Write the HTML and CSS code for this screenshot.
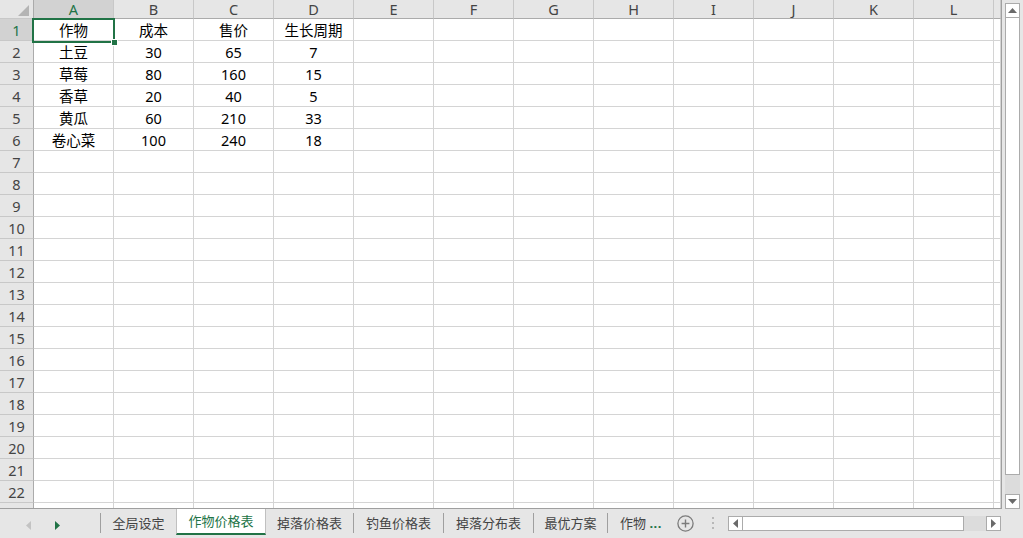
FILE: index.html
```html
<!DOCTYPE html>
<html lang="zh-CN">
<head>
    <meta charset="UTF-8">
    <title>作物价格表 - Excel</title>
    <link rel="stylesheet" href="styles.css">
</head>
<body>
    <div class="window">
        <div class="main">
            <div class="grid">
                <table class="sheet">
                    <colgroup>
                        <col class="col-rh">
                        <col class="col"><col class="col"><col class="col"><col class="col">
                        <col class="col"><col class="col"><col class="col"><col class="col">
                        <col class="col"><col class="col"><col class="col"><col class="col">
                        <col class="col-rest">
                    </colgroup>
                    <tr class="hdr">
                        <th class="corner"><svg width="11" height="11" viewBox="0 0 11 11"><polygon points="11,0 11,11 0,11" fill="#b4b4b4"/></svg></th>
                        <th class="sel">A</th><th>B</th><th>C</th><th>D</th><th>E</th><th>F</th>
                        <th>G</th><th>H</th><th>I</th><th>J</th><th>K</th><th>L</th><th></th>
                    </tr>
                    <tr><th class="sel">1</th><td>作物</td><td>成本</td><td>售价</td><td>生长周期</td><td></td><td></td><td></td><td></td><td></td><td></td><td></td><td></td><td></td></tr>
                    <tr><th>2</th><td>土豆</td><td>30</td><td>65</td><td>7</td><td></td><td></td><td></td><td></td><td></td><td></td><td></td><td></td><td></td></tr>
                    <tr><th>3</th><td>草莓</td><td>80</td><td>160</td><td>15</td><td></td><td></td><td></td><td></td><td></td><td></td><td></td><td></td><td></td></tr>
                    <tr><th>4</th><td>香草</td><td>20</td><td>40</td><td>5</td><td></td><td></td><td></td><td></td><td></td><td></td><td></td><td></td><td></td></tr>
                    <tr><th>5</th><td>黄瓜</td><td>60</td><td>210</td><td>33</td><td></td><td></td><td></td><td></td><td></td><td></td><td></td><td></td><td></td></tr>
                    <tr><th>6</th><td>卷心菜</td><td>100</td><td>240</td><td>18</td><td></td><td></td><td></td><td></td><td></td><td></td><td></td><td></td><td></td></tr>
                    <tr><th>7</th><td></td><td></td><td></td><td></td><td></td><td></td><td></td><td></td><td></td><td></td><td></td><td></td><td></td></tr>
                    <tr><th>8</th><td></td><td></td><td></td><td></td><td></td><td></td><td></td><td></td><td></td><td></td><td></td><td></td><td></td></tr>
                    <tr><th>9</th><td></td><td></td><td></td><td></td><td></td><td></td><td></td><td></td><td></td><td></td><td></td><td></td><td></td></tr>
                    <tr><th>10</th><td></td><td></td><td></td><td></td><td></td><td></td><td></td><td></td><td></td><td></td><td></td><td></td><td></td></tr>
                    <tr><th>11</th><td></td><td></td><td></td><td></td><td></td><td></td><td></td><td></td><td></td><td></td><td></td><td></td><td></td></tr>
                    <tr><th>12</th><td></td><td></td><td></td><td></td><td></td><td></td><td></td><td></td><td></td><td></td><td></td><td></td><td></td></tr>
                    <tr><th>13</th><td></td><td></td><td></td><td></td><td></td><td></td><td></td><td></td><td></td><td></td><td></td><td></td><td></td></tr>
                    <tr><th>14</th><td></td><td></td><td></td><td></td><td></td><td></td><td></td><td></td><td></td><td></td><td></td><td></td><td></td></tr>
                    <tr><th>15</th><td></td><td></td><td></td><td></td><td></td><td></td><td></td><td></td><td></td><td></td><td></td><td></td><td></td></tr>
                    <tr><th>16</th><td></td><td></td><td></td><td></td><td></td><td></td><td></td><td></td><td></td><td></td><td></td><td></td><td></td></tr>
                    <tr><th>17</th><td></td><td></td><td></td><td></td><td></td><td></td><td></td><td></td><td></td><td></td><td></td><td></td><td></td></tr>
                    <tr><th>18</th><td></td><td></td><td></td><td></td><td></td><td></td><td></td><td></td><td></td><td></td><td></td><td></td><td></td></tr>
                    <tr><th>19</th><td></td><td></td><td></td><td></td><td></td><td></td><td></td><td></td><td></td><td></td><td></td><td></td><td></td></tr>
                    <tr><th>20</th><td></td><td></td><td></td><td></td><td></td><td></td><td></td><td></td><td></td><td></td><td></td><td></td><td></td></tr>
                    <tr><th>21</th><td></td><td></td><td></td><td></td><td></td><td></td><td></td><td></td><td></td><td></td><td></td><td></td><td></td></tr>
                    <tr><th>22</th><td></td><td></td><td></td><td></td><td></td><td></td><td></td><td></td><td></td><td></td><td></td><td></td><td></td></tr>
                    <tr><th>23</th><td></td><td></td><td></td><td></td><td></td><td></td><td></td><td></td><td></td><td></td><td></td><td></td><td></td></tr>
                </table>
                <div class="selection"><span class="handle"></span></div>
            </div>
            <div class="vscroll">
                <div class="sbtn"><svg width="9" height="5" viewBox="0 0 9 5"><polygon points="0,5 9,5 4.5,0" fill="#6a6a6a"/></svg></div>
                <div class="vthumb"></div>
                <div class="vtrack"></div>
                <div class="sbtn"><svg width="9" height="5" viewBox="0 0 9 5"><polygon points="0,0 9,0 4.5,5" fill="#6a6a6a"/></svg></div>
            </div>
        </div>

        <div class="tabbar">
            <div class="nav">
                <svg width="5" height="9" viewBox="0 0 5 9"><polygon points="5,0 5,9 0,4.5" fill="#c3c3c3"/></svg>
                <svg width="5" height="9" viewBox="0 0 5 9"><polygon points="0,0 0,9 5,4.5" fill="#217346"/></svg>
            </div>
            <div class="tabs">
                <div class="tab w76">全局设定</div>
                <div class="tab active">作物价格表</div>
                <div class="tab w87 after-active">掉落价格表</div>
                <div class="tab w90">钓鱼价格表</div>
                <div class="tab w90">掉落分布表</div>
                <div class="tab w74">最优方案</div>
                <div class="tab last">作物 <span class="more">...</span></div>
            </div>
            <div class="add">
                <svg width="17" height="17" viewBox="0 0 17 17"><circle cx="8.5" cy="8.5" r="7.6" fill="none" stroke="#7b7b7b" stroke-width="1.3"/><path d="M8.5 4.6v7.8M4.6 8.5h7.8" stroke="#7b7b7b" stroke-width="1.4"/></svg>
            </div>
            <div class="grip"><span></span><span></span><span></span></div>
            <div class="hscroll">
                <div class="sbtn"><svg width="5" height="9" viewBox="0 0 5 9"><polygon points="5,0 5,9 0,4.5" fill="#6a6a6a"/></svg></div>
                <div class="hthumb"></div>
                <div class="htrack"></div>
                <div class="sbtn"><svg width="5" height="9" viewBox="0 0 5 9"><polygon points="0,0 0,9 5,4.5" fill="#6a6a6a"/></svg></div>
            </div>
        </div>
    </div>
</body>
</html>
```

FILE: styles.css
```css
* {
    margin: 0;
    padding: 0;
    box-sizing: border-box;
}

body {
    font-family: "Noto Sans", "Noto Sans CJK SC", sans-serif;
    background-color: #ffffff;
    width: 1023px;
    height: 538px;
    overflow: hidden;
    color: #000000;
}

.window {
    display: flex;
    flex-direction: column;
    height: 538px;
}

.main {
    display: flex;
    height: 509px;
}

/* sheet grid */
.grid {
    position: relative;
    width: 1002px;
    height: 509px;
    overflow: hidden;
    border-right: 1px solid #9f9f9f;
    border-bottom: 1px solid #9f9f9f;
}

.sheet {
    border-collapse: separate;
    border-spacing: 0;
    table-layout: fixed;
    width: 1001px;
}

.col-rh { width: 34px; }
.col { width: 80px; }
.col-rest { width: 7px; }

.sheet td,
.sheet th {
    height: 22px;
    padding: 0;
    border-right: 1px solid #d4d4d4;
    border-bottom: 1px solid #d4d4d4;
    text-align: center;
    vertical-align: middle;
    font-size: 14.5px;
    font-weight: normal;
    line-height: 20px;
    white-space: nowrap;
    overflow: hidden;
}

.sheet th {
    background-color: #e6e6e6;
    color: #444444;
    font-size: 14.5px;
}

.sheet tr th:first-child {
    border-right: 1px solid #ababab;
    border-bottom: 1px solid #c8c8c8;
}

.sheet .hdr th {
    height: 19px;
    line-height: 18px;
    border-right: 1px solid #c8c8c8;
    border-bottom: 1px solid #ababab;
}

.sheet .hdr th.corner {
    border-right: 1px solid #ababab;
    text-align: right;
    vertical-align: bottom;
    padding: 0 4px 2px 0;
    line-height: 0;
}

.sheet th.sel {
    background-color: #d2d2d2;
    color: #217346;
}

.selection {
    position: absolute;
    left: 32px;
    top: 18px;
    width: 83px;
    height: 25px;
    border: 2px solid #217346;
}

.handle {
    position: absolute;
    right: -5px;
    bottom: -5px;
    width: 7px;
    height: 7px;
    background-color: #217346;
    border: 1px solid #ffffff;
}

/* scrollbars */
.vscroll {
    flex: 1;
    background-color: #e6e6e6;
    padding: 3px 3px 0 3px;
    display: flex;
    flex-direction: column;
}

.sbtn {
    width: 15px;
    height: 15px;
    flex-shrink: 0;
    background-color: #ffffff;
    border: 1px solid #ababab;
    display: flex;
    align-items: center;
    justify-content: center;
}

.vthumb {
    height: 457px;
    background-color: #ffffff;
    border: 1px solid #ababab;
    border-top: none;
}

.vtrack {
    flex: 1;
    background-color: #dcdcdc;
}

/* sheet tabs */
.tabbar {
    flex: 1;
    display: flex;
    background-color: #e6e6e6;
    font-size: 13px;
    color: #444444;
}

.nav {
    width: 100px;
    display: flex;
    align-items: center;
    gap: 24px;
    padding-left: 26px;
    padding-top: 4px;
}

.tabs {
    display: flex;
    align-items: flex-start;
}

.tab {
    height: 20px;
    margin-top: 4px;
    line-height: 20px;
    text-align: center;
    border-left: 1px solid #9f9f9f;
}

.w76 { width: 76px; }
.w87 { width: 87px; }
.w90 { width: 90px; }
.w74 { width: 74px; }

.tab.active {
    width: 90px;
    height: 26px;
    margin-top: 0;
    line-height: 24px;
    background-color: #ffffff;
    color: #217346;
    border-left: 1px solid #c0c0c0;
    border-right: 1px solid #c0c0c0;
    border-bottom: 2px solid #217346;
}

.tab.after-active {
    border-left: none;
}

.tab.last {
    width: 64px;
    text-align: left;
    padding-left: 12px;
}

.more {
    color: #217346;
    font-weight: bold;
    letter-spacing: 0.5px;
}

.add {
    width: 26px;
    display: flex;
    align-items: center;
    justify-content: center;
    margin-left: 1px;
    padding-bottom: 1px;
}

.grip {
    width: 30px;
    display: flex;
    flex-direction: column;
    align-items: center;
    justify-content: center;
    gap: 3px;
    padding-bottom: 1px;
}

.grip span {
    width: 2px;
    height: 2px;
    background-color: #b8b8b8;
}

.hscroll {
    display: flex;
    width: 273px;
    height: 15px;
    margin-top: 7px;
}

.hthumb {
    width: 221px;
    background-color: #ffffff;
    border: 1px solid #ababab;
    border-left: none;
}

.htrack {
    flex: 1;
    background-color: #dcdcdc;
}
```
